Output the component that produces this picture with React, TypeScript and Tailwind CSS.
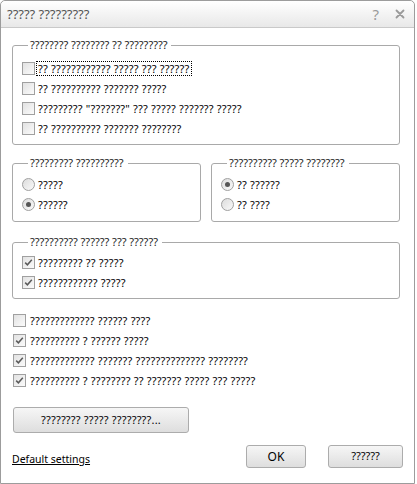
import React from "react";

const font = { fontFamily: '"Noto Sans", "DejaVu Sans", sans-serif' };

function CheckBox({ checked }: { checked?: boolean }) {
  return (
    <span className="relative flex h-[13px] w-[13px] shrink-0 items-center justify-center border border-[#a0a0a0] bg-gradient-to-br from-[#e2e2e2] to-[#fbfbfb]">
      {checked && (
        <svg width="9" height="9" viewBox="0 0 9 9">
          <path d="M1.2 4.6 L3.4 6.8 L7.8 1.8" fill="none" stroke="#5a5a5a" strokeWidth="1.5" />
        </svg>
      )}
    </span>
  );
}

function Radio({ checked }: { checked?: boolean }) {
  return (
    <span className="flex h-[13px] w-[13px] shrink-0 items-center justify-center rounded-full border border-[#a0a0a0] bg-gradient-to-br from-[#dcdcdc] to-[#fafafa]">
      {checked && <span className="h-[5px] w-[5px] rounded-full bg-[#555]" />}
    </span>
  );
}

function Row({
  children,
  checked,
  radio,
  focus,
  gap,
}: {
  children: React.ReactNode;
  checked?: boolean;
  radio?: boolean;
  focus?: boolean;
  gap?: boolean;
}) {
  return (
    <div className="flex h-[20px] items-center">
      {radio ? <Radio checked={checked} /> : <CheckBox checked={checked} />}
      <span
        className={
          "whitespace-nowrap px-[1px] leading-[13px] tracking-[0.2px] " +
          (focus ? "border border-dotted border-black " : "border border-transparent ") +
          (gap ? "ml-[2px]" : "ml-[1px]")
        }
      >
        {children}
      </span>
    </div>
  );
}

function Legend({ children }: { children: React.ReactNode }) {
  return (
    <legend className="ml-[6px] px-[2px] pr-[4px] text-[11px] leading-[14px] text-[#222]">
      {children}
    </legend>
  );
}

function Button({ children, className }: { children: React.ReactNode; className: string }) {
  return (
    <div
      className={
        "flex items-center justify-center rounded-[3px] border border-[#acacac] bg-gradient-to-b from-[#f6f6f6] to-[#dedede] text-black " +
        className
      }
    >
      {children}
    </div>
  );
}

export default function App() {
  return (
    <div className="h-[484px] w-[417px] bg-white" style={font}>
      <div className="flex h-[484px] w-[415px] flex-col rounded-t-[5px] border border-[#9c9c9c] bg-white text-[11px] text-black">
        {/* Title bar */}
        <div className="flex h-[27px] shrink-0 items-center rounded-t-[5px] border-b border-[#c9c9c9] bg-gradient-to-b from-[#ffffff] to-[#e8e8e8] pl-[6px] pr-[9px]">
          <span className="text-[13px] leading-[16px] text-[#555]">????? ?????????</span>
          <div className="ml-auto flex items-center gap-[16px]">
            <span className="text-[15px] leading-[16px] text-[#9a9a9a]">?</span>
            <svg width="10" height="10" viewBox="0 0 10 10">
              <path d="M1.5 1.5 L8.5 8.5 M8.5 1.5 L1.5 8.5" stroke="#9a9a9a" strokeWidth="1.8" strokeLinecap="round" />
            </svg>
          </div>
        </div>

        <div className="flex flex-1 flex-col pl-[11px] pr-[14px] pt-[10px]">
          {/* Group 1 */}
          <fieldset className="rounded-[3px] border border-[#a9a9a9] pb-[6px] pl-[9px] pt-[6px]">
            <Legend>???????? ???????? ?? ?????????</Legend>
            <Row focus>?? ???????????? ????? ??? ??????</Row>
            <Row>?? ?????????? ??????? ?????</Row>
            <Row>????????? "???????" ??? ????? ??????? ?????</Row>
            <Row>?? ?????????? ??????? ????????</Row>
          </fieldset>

          {/* Group 2 */}
          <div className="mt-[11px] grid grid-cols-2 gap-[10px]">
            <fieldset className="rounded-[3px] border border-[#a9a9a9] pb-[7px] pl-[9px] pt-[4px]">
              <Legend>????????? ??????????</Legend>
              <Row radio>?????</Row>
              <Row radio checked>??????</Row>
            </fieldset>
            <fieldset className="rounded-[3px] border border-[#a9a9a9] pb-[7px] pl-[9px] pt-[4px]">
              <Legend>?????????? ????? ????????</Legend>
              <Row radio checked>?? ??????</Row>
              <Row radio>?? ????</Row>
            </fieldset>
          </div>

          {/* Group 3 */}
          <fieldset className="mt-[13px] rounded-[3px] border border-[#a9a9a9] pb-[6px] pl-[9px] pt-[3px]">
            <Legend>?????????? ?????? ??? ??????</Legend>
            <Row checked>????????? ?? ?????</Row>
            <Row checked>???????????? ?????</Row>
          </fieldset>

          {/* Loose checkboxes */}
          <div className="mt-[11px] flex flex-col pl-[1px]">
            <Row gap>????????????? ?????? ????</Row>
            <Row gap checked>?????????? ? ?????? ?????</Row>
            <Row gap checked>????????????? ??????? ?????????????? ????????</Row>
            <Row gap checked>?????????? ? ???????? ?? ??????? ????? ??? ?????</Row>
          </div>

          <Button className="ml-[1px] mt-[17px] h-[26px] w-[176px] text-[11px] tracking-[0.2px]">???????? ????? ????????...</Button>

          {/* Bottom row */}
          <div className="mt-[12px] flex items-end">
            <span className="mb-[2px] text-[10.5px] leading-[14px] text-black underline">Default settings</span>
            <div className="-mr-[3px] ml-auto flex gap-[22px]">
              <Button className="h-[23px] w-[60px] text-[12px]">OK</Button>
              <Button className="h-[23px] w-[75px] text-[11px]">??????</Button>
            </div>
          </div>
        </div>
      </div>
    </div>
  );
}
